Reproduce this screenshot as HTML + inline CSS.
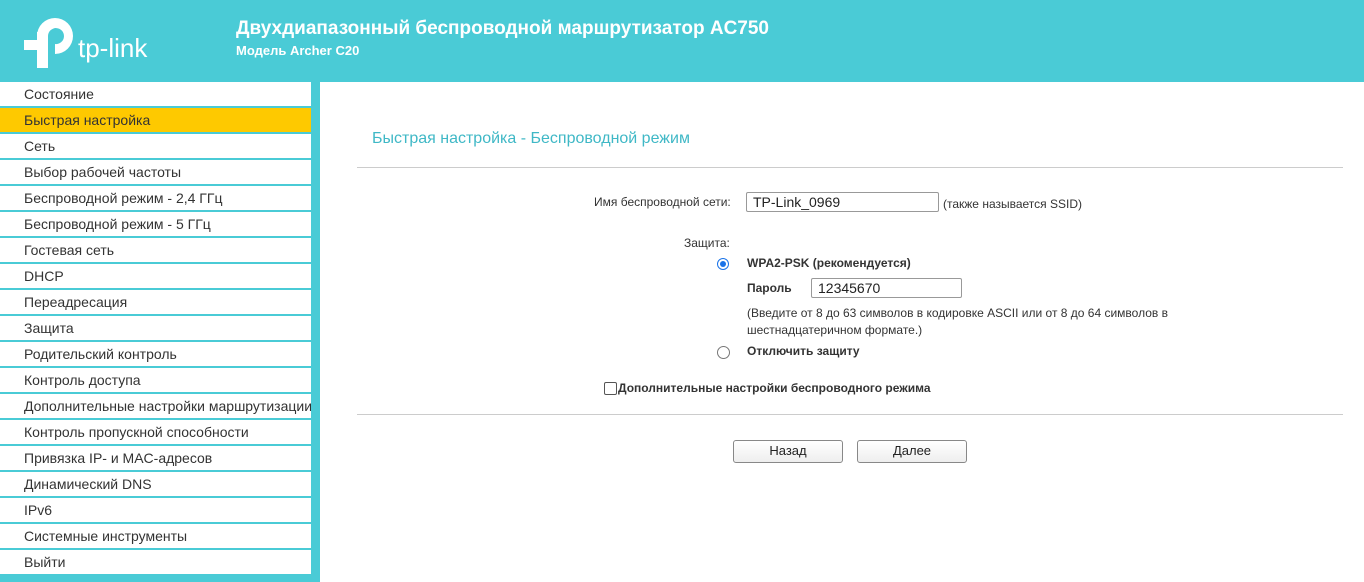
<!DOCTYPE html>
<html><head><meta charset="utf-8"><style>
body{margin:0;width:1364px;height:582px;overflow:hidden;background:#fff;font-family:"Liberation Sans",Arial,sans-serif;position:relative}
#hd{position:absolute;left:0;top:0;width:1364px;height:82px;background:#4acbd6}
#t1{position:absolute;left:236px;top:18px;color:#fff;font-weight:bold;font-size:19px}
#t2{position:absolute;left:236px;top:43px;color:#fff;font-weight:bold;font-size:13px}
#sb{position:absolute;left:0;top:82px;width:320px;height:500px;background:#4acbd6}
.it{position:absolute;left:0;width:311px;height:24px;background:#fff;font-size:14px;color:#333;line-height:24px;padding-left:24px;box-sizing:border-box;white-space:nowrap;overflow:hidden}
.it.a{background:#fec900}
.c{position:absolute;font-size:12px;color:#333}
.b{font-weight:bold}
.inp{position:absolute;border:1px solid #999;border-radius:2px;height:20px;box-sizing:border-box;font-size:14px;line-height:18px;padding-left:6px;color:#222;background:#fff}
.btn{position:absolute;width:108px;height:21px;border:1px solid #888;border-radius:3px;background:linear-gradient(#fff,#eee);font-size:13px;text-align:center;line-height:20px;color:#222}
.hr{position:absolute;left:357px;width:986px;height:1px;background:#ccc}
</style></head><body>
<div id="hd">
<svg style="position:absolute;left:0;top:0" width="180" height="82" viewBox="0 0 180 82">
<rect x="24" y="40" width="24" height="10" fill="#fff"/>
<rect x="37" y="32" width="11" height="36" fill="#fff"/>
<path d="M37 36 A18 18 0 1 1 55 54 L55 44 A8 8 0 1 0 48 36 Z" fill="#fff"/>
<text x="78" y="57" fill="#fff" font-family="Liberation Sans,sans-serif" font-size="26">tp-link</text>
</svg>
<div id="t1">Двухдиапазонный беспроводной маршрутизатор AC750</div>
<div id="t2">Модель Archer C20</div>
</div>
<div id="sb">
<div class="it" style="top:0">Состояние</div>
<div class="it a" style="top:26px">Быстрая настройка</div>
<div class="it" style="top:52px">Сеть</div>
<div class="it" style="top:78px">Выбор рабочей частоты</div>
<div class="it" style="top:104px">Беспроводной режим - 2,4 ГГц</div>
<div class="it" style="top:130px">Беспроводной режим - 5 ГГц</div>
<div class="it" style="top:156px">Гостевая сеть</div>
<div class="it" style="top:182px">DHCP</div>
<div class="it" style="top:208px">Переадресация</div>
<div class="it" style="top:234px">Защита</div>
<div class="it" style="top:260px">Родительский контроль</div>
<div class="it" style="top:286px">Контроль доступа</div>
<div class="it" style="top:312px">Дополнительные настройки маршрутизации</div>
<div class="it" style="top:338px">Контроль пропускной способности</div>
<div class="it" style="top:364px">Привязка IP- и MAC-адресов</div>
<div class="it" style="top:390px">Динамический DNS</div>
<div class="it" style="top:416px">IPv6</div>
<div class="it" style="top:442px">Системные инструменты</div>
<div class="it" style="top:468px">Выйти</div>
</div>
<div class="c" style="left:372px;top:130px;font-size:16px;color:#3fb8c6">Быстрая настройка - Беспроводной режим</div>
<div class="hr" style="top:167px"></div>
<div class="c" style="left:594px;top:195px">Имя беспроводной сети:</div>
<div class="inp" style="left:746px;top:192px;width:193px">TP-Link_0969</div>
<div class="c" style="left:943px;top:197px">(также называется SSID)</div>
<div class="c" style="left:684px;top:236px">Защита:</div>
<div style="position:absolute;left:717px;top:258px;width:12px;height:12px;border-radius:50%;border:1px solid #1a73e8;box-sizing:border-box;background:#fff"><div style="position:absolute;left:2px;top:2px;width:6px;height:6px;border-radius:50%;background:#1a73e8"></div></div>
<div class="c b" style="left:747px;top:256px">WPA2-PSK (рекомендуется)</div>
<div class="c b" style="left:747px;top:281px">Пароль</div>
<div class="inp" style="left:811px;top:278px;width:151px">12345670</div>
<div class="c" style="left:747px;top:305px;line-height:17px">(Введите от 8 до 63 символов в кодировке ASCII или от 8 до 64 символов в<br>шестнадцатеричном формате.)</div>
<div style="position:absolute;left:717px;top:346px;width:13px;height:13px;border-radius:50%;border:1px solid #777;box-sizing:border-box"></div>
<div class="c b" style="left:747px;top:344px">Отключить защиту</div>
<div style="position:absolute;left:604px;top:382px;width:13px;height:13px;border:1px solid #555;border-radius:2px;box-sizing:border-box"></div>
<div class="c b" style="left:618px;top:381px">Дополнительные настройки беспроводного режима</div>
<div class="hr" style="top:414px"></div>
<div class="btn" style="left:733px;top:440px">Назад</div>
<div class="btn" style="left:857px;top:440px">Далее</div>
</body></html>
